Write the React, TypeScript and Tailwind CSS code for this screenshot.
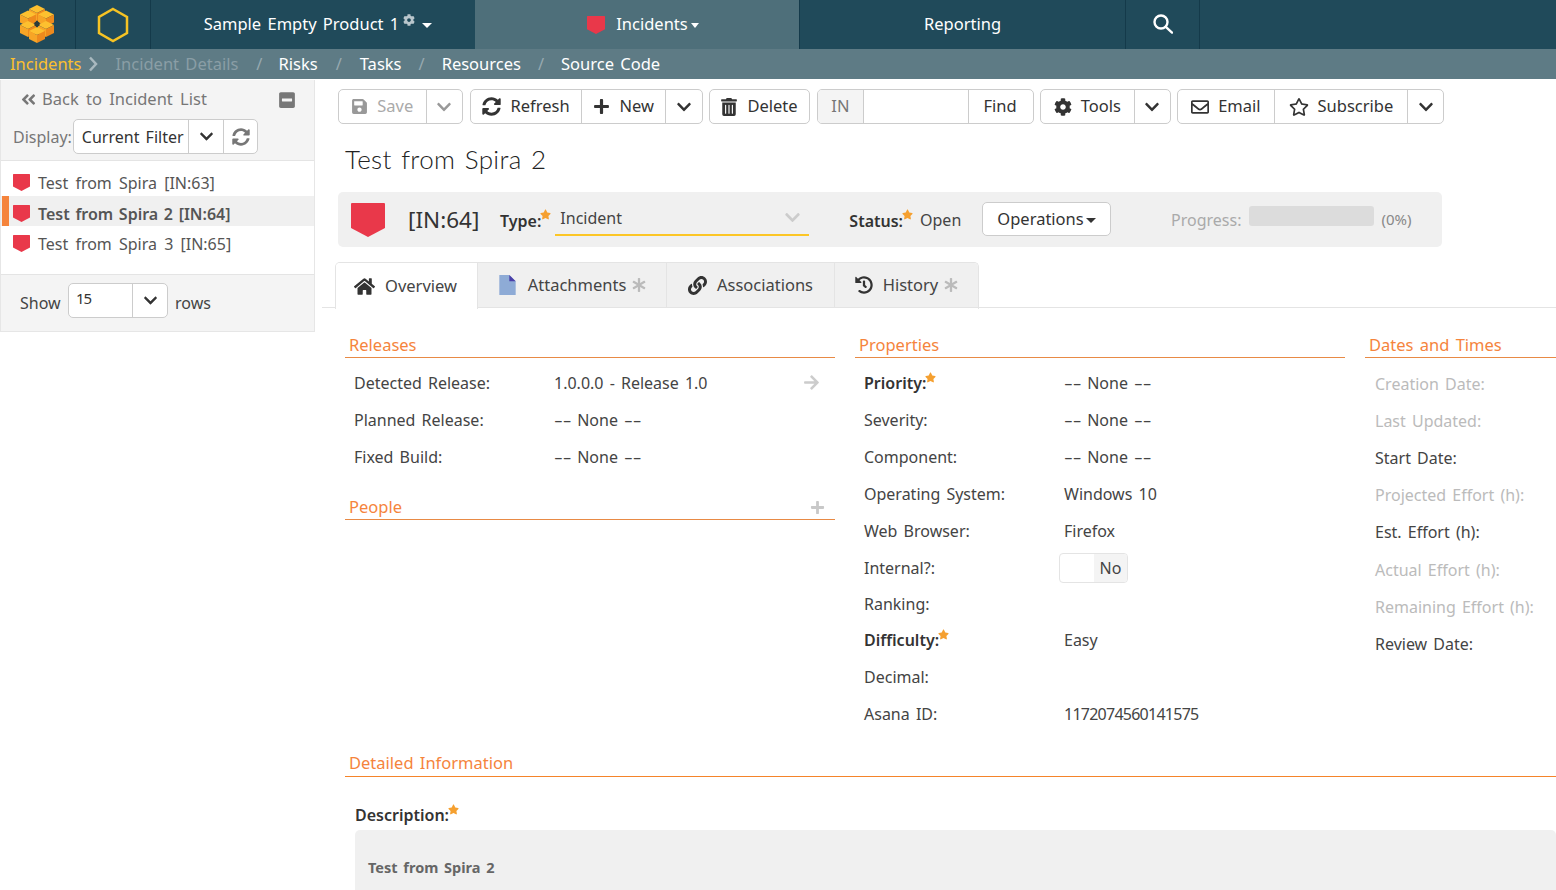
import {
  FaAngleDoubleLeft, FaAsterisk, FaArrowRight, FaChevronDown, FaCog, FaHistory, FaHome, FaLink, FaMinusSquare,
  FaPlus, FaRegEnvelope, FaRegStar, FaSave, FaStar, FaSyncAlt, FaTrashAlt,
} from 'react-icons/fa'
import { ReactNode } from 'react'

const font = { fontFamily: '"Noto Sans", sans-serif' }

function Shield({ className }: { className: string }) {
  return (
    <svg viewBox="0 0 34 34" className={className}>
      <path d="M1 0 H33 Q34 0 34 1 V25 L17 34 L0 25 V1 Q0 0 1 0 Z" fill="#e9384a" />
    </svg>
  )
}

function Cube({ x, y }: { x: number; y: number }) {
  return (
    <g>
      <polygon points={`${x},${y - 4} ${x + 8},${y} ${x},${y + 4} ${x - 8},${y}`} fill="#fdc02f" />
      <polygon points={`${x - 8},${y} ${x},${y + 4} ${x},${y + 12} ${x - 8},${y + 8}`} fill="#f7a526" />
      <polygon points={`${x},${y + 4} ${x + 8},${y} ${x + 8},${y + 8} ${x},${y + 12}`} fill="#ee8a1d" />
    </g>
  )
}

function Logo() {
  return (
    <svg viewBox="0 0 36 40" className="w-[36px] h-[40px]">
      <Cube x={18} y={4} />
      <Cube x={9} y={9.5} />
      <Cube x={27} y={9.5} />
      <Cube x={9} y={20} />
      <Cube x={27} y={20} />
      <Cube x={18} y={26} />
      <polygon points="18,16 20.5,17.5 20.5,20.5 18,22 15.5,20.5 15.5,17.5" fill="#2a3a3a" />
    </svg>
  )
}

function Btn({ children, className = '' }: { children: ReactNode; className?: string }) {
  return (
    <div className={`h-full flex items-center justify-center gap-[9px] border-l border-[#ccc] first:border-l-0 text-[#333] ${className}`}>
      {children}
    </div>
  )
}

function Group({ children, className = '' }: { children: ReactNode; className?: string }) {
  return <div className={`h-[35px] flex border border-[#ccc] rounded-[5px] overflow-hidden bg-white ${className}`}>{children}</div>
}

function Section({ title, className = '', children }: { title: string; className?: string; children?: ReactNode }) {
  return (
    <div className={`h-[28px] border-b border-[#e88a45] pl-[4px] flex items-end justify-between text-[#f5843c] text-[16.5px] leading-[25px] ${className}`}>
      <span>{title}</span>
      {children}
    </div>
  )
}

function Req() {
  return <FaStar className="text-[#f5a030] w-[11px] h-[11px] mb-[11px] ml-[-1px]" />
}

function Dashes() {
  return <span className="inline-block w-[17px] origin-left scale-x-[1.7]">--</span>
}

function None() {
  return (
    <span>
      <Dashes /> None <Dashes />
    </span>
  )
}

function Row({ label, value, bold, muted, h = 'h-[37px]' }: { label: string; value?: ReactNode; bold?: boolean; muted?: boolean; h?: string }) {
  return (
    <div className={`flex items-center pl-[9px] ${h}`}>
      <div className={`w-[200px] flex items-center ${bold ? 'font-semibold text-[#333]' : muted ? 'text-[#bbb]' : 'text-[#444]'}`}>
        {label}
        {bold && <Req />}
      </div>
      <div className="text-[#444]">{value}</div>
    </div>
  )
}

function Tab({ children, active, className = '' }: { children: ReactNode; active?: boolean; className?: string }) {
  return (
    <div className={`flex items-center justify-center gap-[10px] text-[#444] text-[16.5px] ${active ? 'bg-white h-[46px] border-r border-[#e4e4e4]' : 'bg-[#f0f0f0] h-[45px] border-r border-[#e4e4e4] border-b'} ${className}`}>
      {children}
    </div>
  )
}

export default function App() {
  return (
    <div style={font} className="w-[1556px] h-[890px] overflow-hidden bg-white text-[16px] text-[#444] [word-spacing:2px]">
      <div className="h-[49px] bg-[#204a5a] flex text-white text-[16.5px]">
        <div className="w-[76px] flex items-center justify-center border-r border-[#143a4a] pr-[2px]"><Logo /></div>
        <div className="w-[75px] flex items-center justify-center border-r border-[#143a4a]">
          <svg viewBox="0 0 32 36" className="w-[32px] h-[36px]">
            <polygon points="16,2 30,10 30,26 16,34 2,26 2,10" fill="none" stroke="#f6c324" strokeWidth="2.5" />
          </svg>
        </div>
        <div className="w-[324px] flex items-center justify-center pl-[10px]">
          <span>Sample Empty Product 1</span>
          <FaCog className="w-[12px] h-[12px] text-[#b9c6cc] mb-[9px] ml-[4px]" />
          <span className="ml-[7px] mt-[2px] border-x-[5px] border-x-transparent border-t-[5px] border-t-white" />
        </div>
        <div className="w-[325px] bg-[#4e6f7a] border-r border-[#143a4a] flex items-center justify-center pl-[12px]">
          <Shield className="w-[18px] h-[18px] mr-[11px]" />
          <span>Incidents</span>
          <span className="ml-[3px] mt-[2px] border-x-[4.5px] border-x-transparent border-t-[5px] border-t-white" />
        </div>
        <div className="w-[325px] flex items-center justify-center">Reporting</div>
        <div className="w-[75px] flex items-center justify-center border-x border-[#143a4a]">
          <svg viewBox="0 0 20 20" className="w-[20px] h-[20px] mb-[2px]" fill="none" stroke="white" strokeWidth="2.4">
            <circle cx="8" cy="8" r="6.5" />
            <path d="M12.8 12.8 L19 18.6" strokeLinecap="round" />
          </svg>
        </div>
      </div>
      <div className="h-[30px] bg-[#5e7b85] flex items-center pl-[10px] text-white text-[16.5px]">
        <span className="text-[#fcc02e]">Incidents</span>
        <svg viewBox="0 0 10 16" className="w-[10px] h-[16px] ml-[7px]"><path d="M2 1.5 L8 8 L2 14.5" fill="none" stroke="#a9b9bf" strokeWidth="2.5" /></svg>
        <span className="text-[#8a9ea6] ml-[17px]">Incident Details</span>
        <span className="text-[#97a9b0] ml-[18px] mr-[16px]">/</span>
        <span>Risks</span>
        <span className="text-[#97a9b0] mx-[18px]">/</span>
        <span>Tasks</span>
        <span className="text-[#97a9b0] mx-[17px]">/</span>
        <span>Resources</span>
        <span className="text-[#97a9b0] mx-[17px]">/</span>
        <span>Source Code</span>
      </div>

      <div className="flex">
        <div className="w-[315px] h-[252px] shrink-0 bg-[#f4f4f4] border-x border-b border-[#e6e6e6] mt-[1px]">
          <div className="h-[81px] border-b border-[#e4e4e4]">
            <div className="h-[39px] pl-[19px] pr-[18px] flex items-center text-[#777] text-[16.5px] [word-spacing:3px]">
              <FaAngleDoubleLeft className="w-[17px] h-[17px] mr-[5px]" />
              <span className="flex-1">Back to Incident List</span>
              <FaMinusSquare className="w-[18px] h-[18px] text-[#777]" />
            </div>
            <div className="flex items-center pl-[12px]">
              <span className="text-[#777] w-[60px]">Display:</span>
              <Group className="w-[185px] h-[35px]">
                <Btn className="w-[115px] text-[#333] pl-[3px]">Current Filter</Btn>
                <Btn className="w-[35px]"><FaChevronDown className="w-[15px] h-[15px]" /></Btn>
                <Btn className="w-[34px]"><FaSyncAlt className="w-[18px] h-[18px] text-[#777]" /></Btn>
              </Group>
            </div>
          </div>
          <div className="h-[114px] bg-white border-b border-[#e4e4e4] pt-[4px] [word-spacing:3px]">
            {[['Test from Spira [IN:63]', false], ['Test from Spira 2 [IN:64]', true], ['Test from Spira 3 [IN:65]', false]].map(([t, sel]) => (
              <div key={t as string} className={`h-[30.5px] flex items-center pl-[1px] ${sel ? 'bg-[#f0f0f0] font-semibold [word-spacing:1.5px]' : ''} text-[#555]`}>
                <span className={`w-[7px] h-full mr-[3px] ${sel ? 'bg-[#f5843c]' : ''}`} />
                <Shield className="w-[17px] h-[17px] mr-[8px] ml-[1px] mt-[5px]" />
                <span className="mt-[6px]">{t}</span>
              </div>
            ))}
          </div>
          <div className="flex items-center h-[56px] pl-[19px] text-[#444]">
            <span className="w-[48px]">Show</span>
            <Group className="w-[100px] mb-[6px]">
              <Btn className="w-[64px] !justify-start pl-[7px] pb-[3px] text-[15px] tracking-[-1px]">15</Btn>
              <Btn className="w-[35px]"><FaChevronDown className="w-[15px] h-[15px]" /></Btn>
            </Group>
            <span className="ml-[7px]">rows</span>
          </div>
        </div>

        <div className="flex-1 min-w-0 pl-[7px]">
          <div className="pl-[16px] pt-[10px] flex text-[16.5px]">
            <Group className="w-[125px] mr-[7px]">
              <Btn className="w-[88px] !text-[#aaa]"><FaSave className="w-[17px] h-[17px] text-[#999]" />Save</Btn>
              <Btn className="w-[37px]"><FaChevronDown className="w-[16px] h-[16px] text-[#999]" /></Btn>
            </Group>
            <Group className="w-[233px] mr-[6px]">
              <Btn className="w-[111px]"><FaSyncAlt className="w-[19px] h-[19px]" />Refresh</Btn>
              <Btn className="w-[85px]"><FaPlus className="w-[17px] h-[17px]" />New</Btn>
              <Btn className="w-[37px]"><FaChevronDown className="w-[16px] h-[16px]" /></Btn>
            </Group>
            <Group className="w-[101px] mr-[7px]">
              <Btn className="w-full gap-[10px]"><FaTrashAlt className="w-[16px] h-[18px]" />Delete</Btn>
            </Group>
            <Group className="w-[217px] mr-[6px]">
              <Btn className="w-[46px] bg-[#f4f4f4] !text-[#777] border-r border-[#ccc]">IN</Btn>
              <div className="w-[105px]" />
              <Btn className="w-[65px] pr-[2px]">Find</Btn>
            </Group>
            <Group className="w-[131px] mr-[6px]">
              <Btn className="w-[94px]"><FaCog className="w-[18px] h-[18px]" />Tools</Btn>
              <Btn className="w-[37px]"><FaChevronDown className="w-[16px] h-[16px]" /></Btn>
            </Group>
            <Group className="w-[267px]">
              <Btn className="w-[96px]"><FaRegEnvelope className="w-[18px] h-[18px]" />Email</Btn>
              <Btn className="w-[134px]"><FaRegStar className="w-[20px] h-[20px]" />Subscribe</Btn>
              <Btn className="w-[36px]"><FaChevronDown className="w-[16px] h-[16px]" /></Btn>
            </Group>
          </div>

          <h1 style={{ fontFamily: 'Lato, sans-serif' }} className="pl-[23px] mt-[17px] h-[36px] leading-[36px] text-[26px] font-light text-[#222] tracking-[0.35px]">Test from Spira 2</h1>

          <div className="ml-[16px] mt-[15px] w-[1104px] h-[55px] bg-[#f0f0f0] rounded-[5px] flex items-center">
            <Shield className="w-[34px] h-[34px] ml-[13px] mr-[23px]" />
            <span className="text-[22.5px] text-[#333] [word-spacing:0] w-[92px]">[IN:64]</span>
            <span className="font-semibold text-[#333] mt-[2px]">Type:</span>
            <Req />
            <div className="w-[254px] h-[34px] ml-[4px] mb-[2px] border-b-2 border-[#fcc626] flex items-center justify-between pl-[5px] pr-[8px]">
              <span>Incident</span>
              <FaChevronDown className="w-[17px] h-[17px] text-[#ccc]" />
            </div>
            <span className="font-semibold text-[#333] ml-[40px] mt-[2px]">Status:</span>
            <Req />
            <span className="ml-[7px] w-[62px]">Open</span>
            <div className="w-[129px] h-[34px] mb-[2px] pt-[1px] bg-white border border-[#ccc] rounded-[5px] flex items-center justify-center text-[#333] text-[16.5px]">
              Operations
              <span className="ml-[2px] mt-[2px] border-x-[5px] border-x-transparent border-t-[5px] border-t-[#333]" />
            </div>
            <span className="text-[#aaa] ml-[60px] mr-[8px]">Progress:</span>
            <div className="w-[125px] h-[20px] rounded-[3px] bg-[#dcdcdc] mb-[7px]" />
            <span className="text-[#888] ml-[7px] text-[15px]">(0%)</span>
          </div>

          <div className="mt-[15px] h-[46px] border-b border-[#e4e4e4] pl-[13px] flex items-start">
            <div className="w-[644px] flex rounded-t-[5px] border-t border-x border-[#e4e4e4] overflow-hidden">
              <Tab active className="w-[142px] pr-[2px]"><FaHome className="w-[21px] h-[21px] text-[#333]" />Overview</Tab>
              <Tab className="w-[189px] pl-[1px]">
                <svg viewBox="0 0 18 22" className="w-[17px] h-[20px] mr-[2px]"><path d="M0 0 H11 L18 7 V22 H0 Z" fill="#8eabd6" /><path d="M11 0 L18 7 H11 Z" fill="#4a3fa8" /></svg>
                <span>Attachments</span>
                <FaAsterisk className="w-[14px] h-[14px] text-[#bbb] ml-[-4px]" />
              </Tab>
              <Tab className="w-[168px]"><FaLink className="w-[19px] h-[19px] text-[#333]" />Associations</Tab>
              <Tab className="flex-1 !border-r-0"><FaHistory className="w-[18px] h-[18px] text-[#333]" /><span>History</span><FaAsterisk className="w-[14px] h-[14px] text-[#bbb] ml-[-4px]" /></Tab>
            </div>
          </div>

          <div className="pl-[23px] mt-[22px] flex gap-[20px]">
            <div className="w-[490px] shrink-0">
              <Section title="Releases" />
              <div className="pt-[6px]">
                <div className="relative">
                  <Row label="Detected Release:" value="1.0.0.0 - Release 1.0" />
                  <FaArrowRight className="absolute right-[15px] top-[10px] w-[17px] h-[17px] text-[#ccc]" />
                </div>
                <Row label="Planned Release:" value={<None />} />
                <Row label="Fixed Build:" value={<None />} />
              </div>
              <Section title="People" className="mt-[17px]">
                <FaPlus className="w-[15px] h-[15px] text-[#c8c8c8] mr-[10px] mb-[4px]" />
              </Section>
            </div>
            <div className="w-[490px] shrink-0">
              <Section title="Properties" />
              <div className="pt-[6px]">
                <Row label="Priority:" bold value={<None />} />
                <Row label="Severity:" value={<None />} />
                <Row label="Component:" value={<None />} />
                <Row label="Operating System:" value="Windows 10" />
                <Row label="Web Browser:" value="Firefox" />
                <Row
                  label="Internal?:"
                  value={
                    <div className="w-[69px] h-[30px] ml-[-5px] border border-[#e4e4e4] rounded-[4px] flex overflow-hidden">
                      <div className="w-[34px]" />
                      <div className="flex-1 bg-[#f4f4f4] flex items-center justify-center">No</div>
                    </div>
                  }
                />
                <Row label="Ranking:" h="h-[35px]" />
                <Row label="Difficulty:" bold value="Easy" />
                <Row label="Decimal:" />
                <Row label="Asana ID:" value={<span className="tracking-[-0.75px]">1172074560141575</span>} />
              </div>
            </div>
            <div className="flex-1 min-w-[191px]">
              <Section title="Dates and Times" />
              <div className="pt-[7px] pl-[1px] whitespace-nowrap">
                <Row h="h-[37.2px]" label="Creation Date:" muted />
                <Row h="h-[37.2px]" label="Last Updated:" muted />
                <Row h="h-[37.2px]" label="Start Date:" />
                <Row h="h-[37.2px]" label="Projected Effort (h):" muted />
                <Row h="h-[37.2px]" label="Est. Effort (h):" />
                <Row h="h-[37.2px]" label="Actual Effort (h):" muted />
                <Row h="h-[37.2px]" label="Remaining Effort (h):" muted />
                <Row h="h-[37.2px]" label="Review Date:" />
              </div>
            </div>
          </div>

          <div className="pl-[23px] mt-[16px]">
            <div className="h-[29px] pb-[1px] border-b border-[#f5842a] pl-[4px] text-[#f5843c] text-[16.5px] leading-[25px] flex items-end">Detailed Information</div>
            <div className="pl-[10px] pt-[23px]">
              <div className="flex items-center font-semibold text-[#333] h-[30px]">Description:<Req /></div>
              <div className="h-[60px] bg-[#f0f0f0] rounded-t-[5px] pt-[27px] pl-[13px] text-[#666] font-bold text-[14.5px]">Test from Spira 2</div>
            </div>
          </div>
        </div>
      </div>
    </div>
  )
}
